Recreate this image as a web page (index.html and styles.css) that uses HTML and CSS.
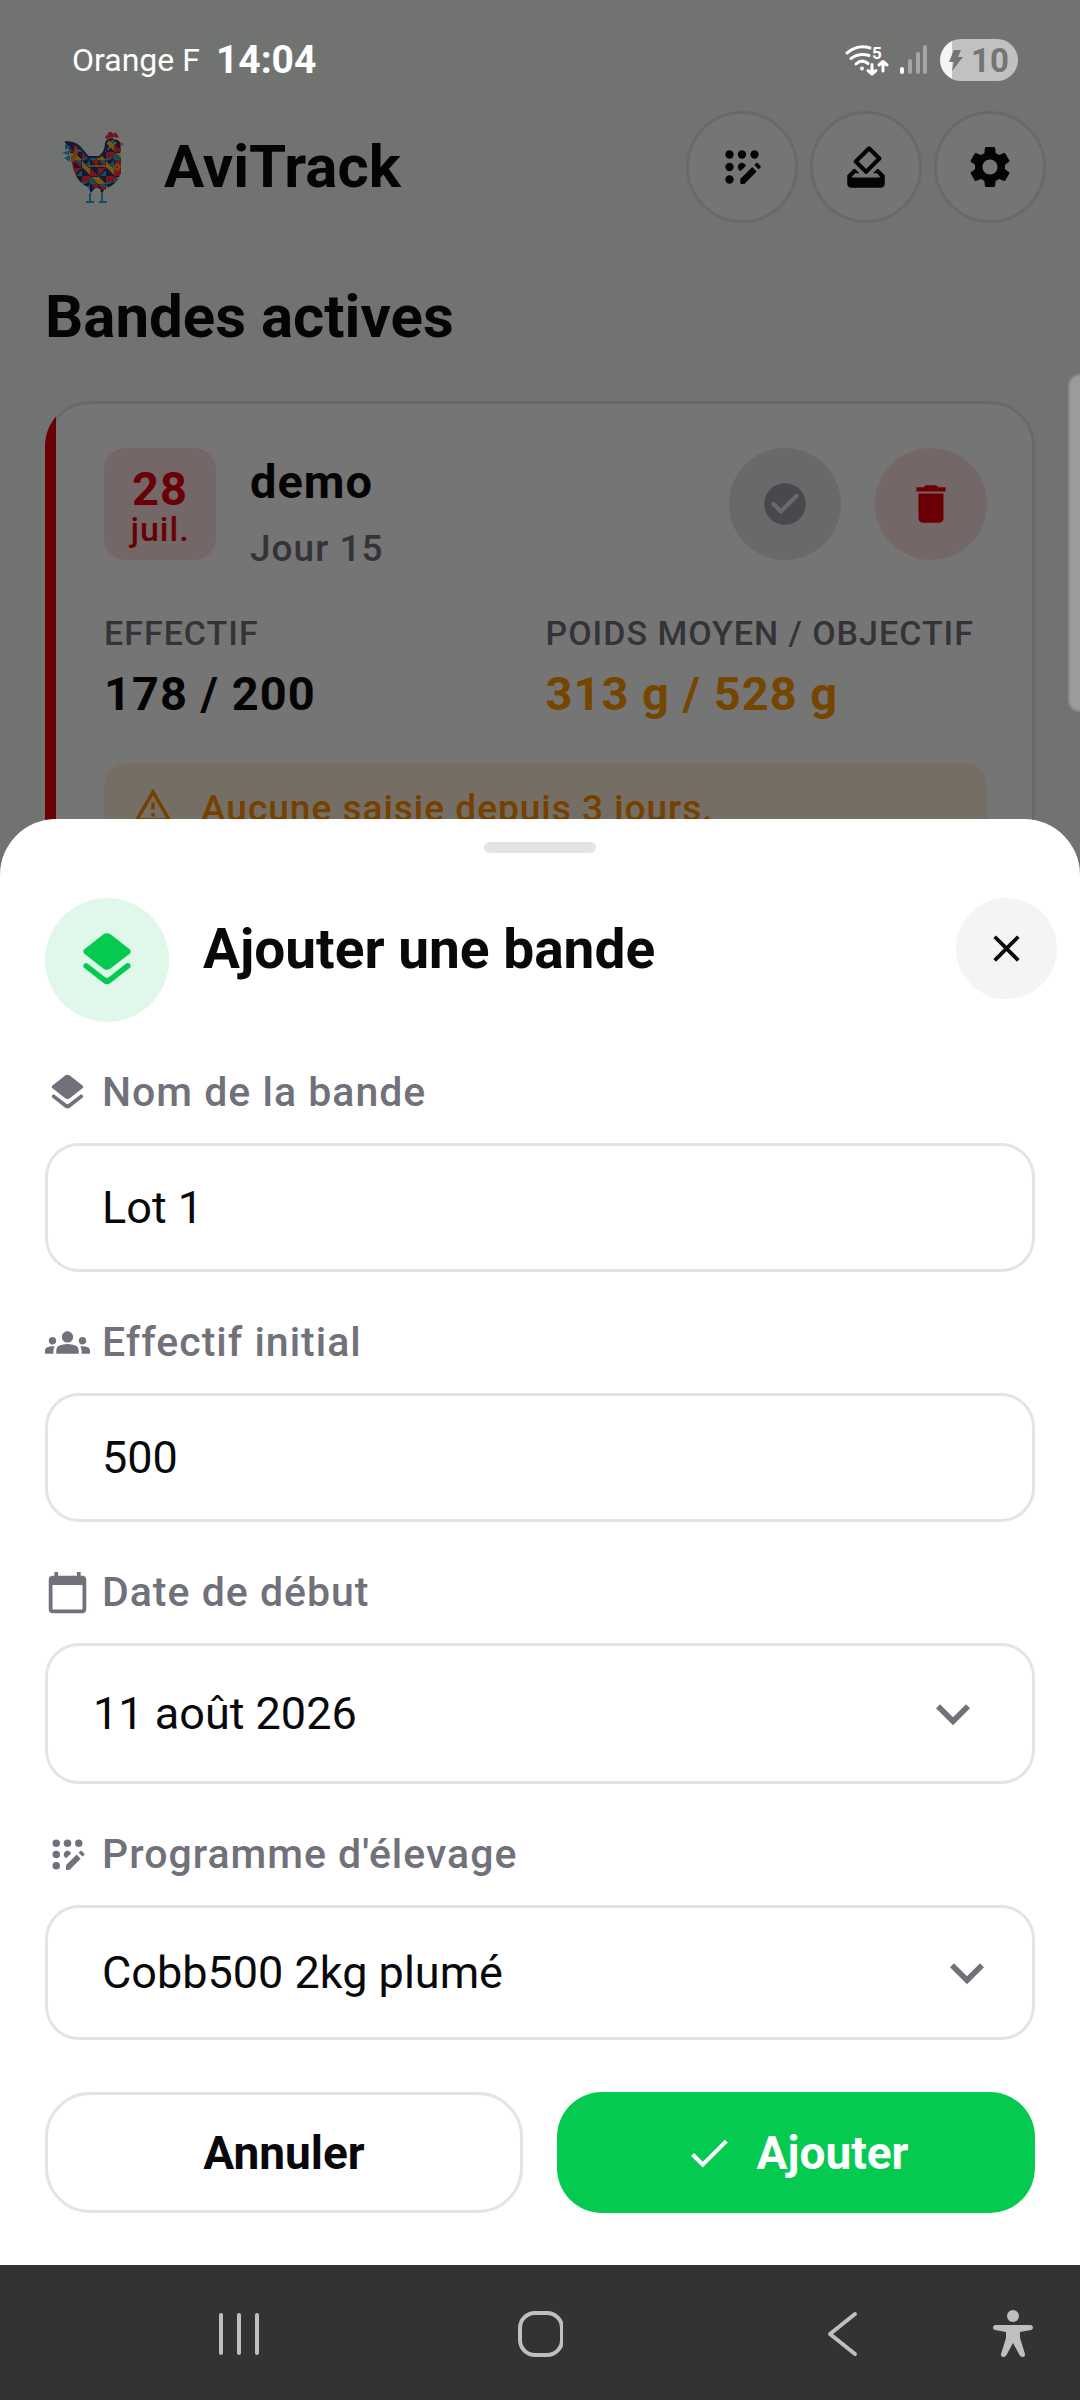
FILE: index.html
```html
<!DOCTYPE html>
<html lang="fr">
<head>
<meta charset="utf-8">
<meta name="viewport" content="width=device-width, initial-scale=1">
<title>AviTrack</title>
<link rel="stylesheet" href="styles.css">
</head>
<body>
<svg class="sprite" aria-hidden="true">
  <symbol id="i-program" viewBox="0 0 24 24">
    <circle cx="6" cy="6" r="2"/><circle cx="12" cy="6" r="2"/><circle cx="18" cy="6" r="2"/>
    <circle cx="6" cy="12" r="2"/><circle cx="6" cy="18" r="2"/>
    <path d="M13.9 11.4A2 2 0 1 0 11.4 13.9z"/>
    <path d="M11.2 18q0-.3.2-.5L16.9 12l2.1 2.2-5.7 5.8q-.2.2-.5.2h-1.2q-.4 0-.4-.4zM17.9 11l.9-.9q.3-.3.7 0l1.4 1.4q.3.3 0 .7l-.9.9z"/>
  </symbol>
  <symbol id="i-layers" viewBox="0 0 24 24">
    <path d="M12.6 18.06c-.36.28-.87.28-1.23 0l-6.15-4.78c-.36-.28-.86-.28-1.22 0-.51.4-.51 1.17 0 1.57l6.76 5.26c.72.56 1.73.56 2.46 0l6.76-5.26c.51-.4.51-1.17 0-1.57l-.01-.01c-.36-.28-.86-.28-1.22 0l-6.15 4.79zm.63-3.02l6.76-5.26c.51-.4.51-1.18 0-1.58l-6.76-5.26c-.72-.56-1.73-.56-2.46 0L4.01 8.21c-.51.4-.51 1.18 0 1.58l6.76 5.26c.72.56 1.74.56 2.46-.01z"/>
  </symbol>
  <symbol id="i-chevron" viewBox="0 0 24 24">
    <path d="M16.59 8.59L12 13.17 7.41 8.59 6 10l6 6 6-6z"/>
  </symbol>
</svg>

<div class="device">
  <div class="status">
    <div class="status-left">
      <span class="carrier">Orange F</span>
      <span class="clock">14:04</span>
    </div>
    <div class="status-right">
      <svg class="wifi" viewBox="0 0 43 30" aria-hidden="true">
        <g fill="none" stroke="#fff" stroke-width="3" stroke-linecap="round" stroke-linejoin="round">
          <path d="M2 8Q13-1 25 3"/><path d="M6 13.500Q14 7.500 24 10.500"/><path d="M11 19Q17 13.500 23 18.500"/>
          <path d="M27 19.500V29M23 25.500L27 29l4-3.500"/><path d="M38 26V17M34 20L38 16.500l4 3.500"/>
        </g>
        <circle cx="17" cy="23.500" r="2" fill="#fff"/>
        <text class="wifi-band" x="27" y="13.500">5</text>
      </svg>
      <svg class="signal" viewBox="0 0 28 30" aria-hidden="true">
        <rect x="0" y="22" width="4" height="7" rx="2" fill="#fff"/>
        <g fill="#a6a7a5"><rect x="8" y="14" width="4" height="15" rx="2"/><rect x="16" y="7" width="4" height="22" rx="2"/><rect x="23" y="0" width="4" height="29" rx="2"/></g>
      </svg>
      <span class="battery">
        <svg class="bolt" viewBox="0 0 14 21" aria-hidden="true"><path d="M5 0h7L9 7h5L3 21l2-9H0z"/></svg>
        <span>10</span>
      </span>
    </div>
  </div>

  <div class="app">
    <header class="topbar">
      <svg class="logo" viewBox="0 2 90 90" role="img" aria-label="Logo AviTrack">
        <defs>
          <pattern id="mosaic" width="24" height="24" patternUnits="userSpaceOnUse">
            <rect width="24" height="24" fill="#2e3478"/>
            <path fill="#ff3040" d="M0 0h8L0 8zM8 8h8v6H8zM17 16h7v8zM16 0l8 8h-8zM0 17h7v7z"/>
            <path fill="#ffc020" d="M9 0h7v7zM0 8l8 8H0zM24 9v7l-7-7zM8 17l7 7H8z"/>
            <path fill="#20b4cc" d="M8 2v6H2zM16 9l7 7h-7zM8 14h8l-8 3zM16 16v8l-4-4zM1 16h6l1 4z"/>
          </pattern>
        </defs>
        <path fill="url(#mosaic)" d="M15 22l9 1q5 2 8 7l6 7h11q7-5 7-14 1-5 7-4 7 0 8 6l-1 6 1 7v10q0 13-10 18l-7 4-2 4-2-5q-3-2-6 0l-3 4-3-6q-10-4-14-16l-3-11-1-8z"/>
        <path fill="none" stroke="#2e3478" stroke-width="2" d="M15 22q12 0 17 8l6 7h11q7-5 7-14 1-4 7-4"/>
        <path fill="#20b4cc" d="M15 24l6 3-6 3zM12 33l8-3-1 5zM14 38l6-3v7z"/>
        <path fill="#f5803c" d="M21 40l4-12 4 2-5 13zM70 22l4 2-4 3z"/>
        <path fill="#ff3040" d="M66 28h5v4l-5-2zM56 19q-2-4 2-4-1-3 2-3 2-1 3 2 2-3 4 0l2 4q-6-2-13 1z"/>
        <path fill="#ff3040" d="M65 42h6v12l-6 2z"/>
        <path fill="none" stroke="#ffc020" stroke-width="1.500" d="M67 44l3 3-3 3-3-3zM39 46h17M62 22l-4 8"/>
        <circle cx="65" cy="23" r="1.500" fill="#ffc020"/>
        <path fill="none" stroke="#20b4cc" stroke-width="2" d="M40 73v9M36 82h8M52 73v9M49 82h8"/>
      </svg>
      <h1 class="brand">AviTrack</h1>
      <div class="actions">
        <button class="round outlined" aria-label="Programmes"><svg class="icon"><use href="#i-program"/></svg></button>
        <button class="round outlined" aria-label="Votes"><svg class="icon" viewBox="0 0 24 24"><path d="M18 13h-.68l-2 2h1.91L19 17H5l1.78-2h2.05l-2-2H6l-3 3v4c0 1.100.890 2 1.990 2H19c1.100 0 2-.890 2-2v-4l-3-3zm-1-5.050l-4.950 4.950-3.540-3.540 4.950-4.950L17 7.950zm-4.240-5.660L6.390 8.660c-.390.390-.390 1.020 0 1.410l4.950 4.950c.390.390 1.020.390 1.410 0l6.360-6.360c.390-.390.390-1.020 0-1.410L14.160 2.300c-.380-.400-1.010-.400-1.400-.010z"/></svg></button>
        <button class="round outlined" aria-label="Paramètres"><svg class="icon" viewBox="0 0 24 24"><path d="M19.14,12.94c0.04-0.3,0.06-0.61,0.06-0.94c0-0.32-0.02-0.64-0.07-0.94l2.03-1.58c0.18-0.14,0.23-0.41,0.12-0.61l-1.92-3.32c-0.12-0.22-0.37-0.29-0.59-0.22l-2.39,0.96c-0.5-0.38-1.03-0.7-1.62-0.94L14.4,2.81c-0.04-0.24-0.24-0.41-0.48-0.41h-3.84c-0.24,0-0.43,0.17-0.47,0.41L9.25,5.35C8.66,5.59,8.12,5.92,7.63,6.29L5.24,5.33c-0.22-0.08-0.47,0-0.59,0.22L2.74,8.87C2.62,9.08,2.66,9.34,2.86,9.48l2.03,1.58C4.84,11.36,4.8,11.69,4.8,12s0.02,0.64,0.07,0.94l-2.03,1.58c-0.18,0.14-0.23,0.41-0.12,0.61l1.92,3.32c0.12,0.22,0.37,0.29,0.59,0.22l2.39-0.96c0.5,0.38,1.03,0.7,1.62,0.94l0.36,2.54c0.05,0.24,0.24,0.41,0.48,0.41h3.84c0.24,0,0.44-0.17,0.47-0.41l0.36-2.54c0.59-0.24,1.13-0.56,1.62-0.94l2.39,0.96c0.22,0.08,0.47,0,0.59-0.22l1.92-3.32c0.12-0.22,0.07-0.47-0.12-0.61L19.14,12.94zM12,15.6c-1.98,0-3.6-1.62-3.6-3.6s1.62-3.6,3.6-3.6s3.6,1.62,3.6,3.6S13.98,15.6,12,15.6z"/></svg></button>
      </div>
    </header>

    <main class="content">
      <h2 class="section-title">Bandes actives</h2>
      <article class="flock">
        <div class="flock-head">
          <div class="date-badge"><span class="day">28</span><span class="month">juil.</span></div>
          <div class="flock-name">
            <h3>demo</h3>
            <p>Jour 15</p>
          </div>
          <div class="flock-actions">
            <button class="round done" aria-label="Terminer"><svg class="icon" viewBox="0 0 24 24"><path d="M12 2C6.480 2 2 6.480 2 12s4.480 10 10 10 10-4.480 10-10S17.520 2 12 2zM9.290 16.290L5.700 12.700c-.390-.390-.390-1.020 0-1.410.390-.390 1.020-.390 1.410 0L10 14.170l6.880-6.880c.390-.390 1.020-.390 1.410 0 .390.390.390 1.020 0 1.410l-7.590 7.590c-.380.390-1.020.390-1.410 0z"/></svg></button>
            <button class="round delete" aria-label="Supprimer"><svg class="icon" viewBox="0 0 24 24"><path d="M6 19c0 1.100.900 2 2 2h8c1.100 0 2-.900 2-2V7H6v12zM19 4h-3.500l-1-1h-5l-1 1H5v2h14V4z"/></svg></button>
          </div>
        </div>
        <dl class="stats">
          <div><dt>EFFECTIF</dt><dd>178 / 200</dd></div>
          <div><dt>POIDS MOYEN / OBJECTIF</dt><dd class="low">313 g / 528 g</dd></div>
        </dl>
        <div class="warning">
          <svg class="warning-icon" viewBox="0 0 24 24" aria-hidden="true"><path d="M12 5.990L19.530 19H4.470L12 5.990M12 2L1 21h22L12 2zm1 14h-2v2h2v-2zm0-6h-2v4h2v-4z"/></svg>
          <p>Aucune saisie depuis 3 jours.</p>
        </div>
      </article>
    </main>
  </div>

  <div class="overlay">
    <span class="edge-handle"></span>
    <form class="sheet" role="dialog" aria-labelledby="sheet-title">
      <span class="grip"></span>
      <div class="sheet-head">
        <span class="sheet-badge"><svg viewBox="0 0 24 24" aria-hidden="true"><use href="#i-layers"/></svg></span>
        <h2 id="sheet-title">Ajouter une bande</h2>
        <button type="button" class="close" aria-label="Fermer"><svg viewBox="0 0 24 24"><path d="M19 6.410L17.590 5 12 10.590 6.410 5 5 6.410 10.590 12 5 17.590 6.410 19 12 13.410 17.590 19 19 17.590 13.410 12z"/></svg></button>
      </div>

      <div class="fields">
        <div class="field">
          <label for="name"><svg class="label-icon"><use href="#i-layers"/></svg>Nom de la bande</label>
          <input class="control" id="name" type="text" value="Lot 1">
        </div>
        <div class="field">
          <label for="count"><svg class="label-icon" viewBox="0 0 24 24"><path d="M12 12.750c1.630 0 3.070.390 4.240.900 1.080.480 1.760 1.560 1.760 2.730V18H6v-1.610c0-1.180.680-2.260 1.760-2.730 1.170-.520 2.610-.910 4.240-.910zM4 13c1.100 0 2-.900 2-2s-.900-2-2-2-2 .900-2 2 .900 2 2 2zm1.130 1.100c-.370-.060-.740-.100-1.130-.100-.990 0-1.930.210-2.780.580C.480 14.900 0 15.620 0 16.430V18h4.500v-1.610c0-.830.230-1.610.630-2.290zM20 13c1.100 0 2-.900 2-2s-.900-2-2-2-2 .900-2 2 .900 2 2 2zm4 3.430c0-.810-.480-1.530-1.220-1.850-.850-.370-1.790-.580-2.780-.580-.390 0-.760.040-1.130.100.400.680.630 1.460.630 2.290V18H24v-1.570zM12 6c1.660 0 3 1.340 3 3s-1.340 3-3 3-3-1.340-3-3 1.340-3 3-3z"/></svg>Effectif initial</label>
          <input class="control" id="count" type="text" inputmode="numeric" value="500">
        </div>
        <div class="field">
          <label for="start"><svg class="label-icon" viewBox="0 0 24 24"><path d="M20 3h-1V1h-2v2H7V1H5v2H4c-1.100 0-2 .900-2 2v16c0 1.100.900 2 2 2h16c1.100 0 2-.900 2-2V5c0-1.100-.900-2-2-2zm0 18H4V8h16v13z"/></svg>Date de début</label>
          <button class="control date" id="start" type="button"><span>11 août 2026</span><svg class="chevron"><use href="#i-chevron"/></svg></button>
        </div>
        <div class="field">
          <label for="program"><svg class="label-icon"><use href="#i-program"/></svg>Programme d'élevage</label>
          <div class="select-wrap">
            <select class="control" id="program"><option>Cobb500 2kg plumé</option></select>
            <svg class="chevron"><use href="#i-chevron"/></svg>
          </div>
        </div>
      </div>

      <div class="sheet-actions">
        <button type="button" class="btn cancel">Annuler</button>
        <button type="submit" class="btn submit"><svg class="icon" viewBox="0 0 24 24" aria-hidden="true"><path d="M9 16.170L4.830 12l-1.420 1.410L9 19 21 7l-1.410-1.410z"/></svg>Ajouter</button>
      </div>
    </form>

    <nav class="system-nav">
      <button aria-label="Applications récentes"><svg width="46" height="48" viewBox="0 0 46 48"><path d="M5 6v38M23 6v38M41 6v38"/></svg></button>
      <button aria-label="Accueil"><svg width="46" height="48" viewBox="0 0 46 48"><rect x="3" y="4" width="42" height="42" rx="15"/></svg></button>
      <button aria-label="Retour"><svg width="46" height="48" viewBox="0 0 46 48"><path d="M37 5L12 25l25 20"/></svg></button>
      <button aria-label="Accessibilité"><svg class="solid" width="40" height="48" viewBox="0 0 40 48"><circle cx="20" cy="7" r="6"/><path d="M2 16h36q2 .500 2 2.500T38 21l-11 2v6l5 16q.500 3-2.500 3-2 0-3-2L20 34l-6.500 12q-1 2-3 2-3 0-2.500-3l5-16v-6L2 21q-2-.500-2-2.500T2 16z"/></svg></button>
    </nav>
  </div>
</div>
</body>
</html>
```
FILE: styles.css
```css
:root {
  --text: #09090b;
  --muted: #71717b;
  --line: #e4e4e7;
  --green: #04cb50;
  --red: #e7000b;
  --orange: #fe9a00;
  --gutter: 45px;
}

* { box-sizing: border-box; }

body {
  margin: 0;
  font-family: Roboto, "Liberation Sans", sans-serif;
  color: var(--text);
}

h1, h2, h3, p, dl, dd { margin: 0; }

button {
  padding: 0;
  border: 0;
  font: inherit;
  color: inherit;
  background: none;
}

svg { flex: none; fill: currentColor; }

.sprite { position: absolute; width: 0; height: 0; }

.icon { width: 50px; height: 50px; }

.device {
  position: relative;
  min-height: 100vh;
  background: #f6faf3;
}

/* Status bar */
.status {
  position: absolute;
  inset: 0 0 auto;
  z-index: 2;
  display: flex;
  justify-content: space-between;
  align-items: center;
  height: 120px;
  padding: 0 62px 0 72px;
  color: #fff;
}

.status-left, .status-right { display: flex; align-items: center; }
.status-left { gap: 16px; }
.status-right { gap: 12px; }
.carrier { font-size: 32px; }
.clock { font-size: 39px; font-weight: 700; }
.wifi { width: 43px; height: 30px; overflow: visible; }
.wifi-band { font-size: 17px; font-weight: 700; fill: #fff; }
.signal { width: 28px; height: 30px; }

.battery {
  display: flex;
  align-items: center;
  justify-content: center;
  gap: 8px;
  width: 78px;
  height: 42px;
  border-radius: 21px;
  font-size: 33px;
  font-weight: 700;
  color: #747573;
  background: linear-gradient(to right, #f4f4f4 12px, #c1c1c1 12px);
}

.bolt { width: 14px; height: 21px; }

/* Flock list */
.app { padding-top: 111px; }

.topbar {
  display: flex;
  align-items: center;
  padding: 0 34px 0 50px;
}

.logo { width: 90px; height: 90px; margin-right: 24px; }
.brand { flex: 1; font-size: 60px; font-weight: 700; line-height: 76px; }
.actions { display: flex; gap: 12px; }

.round {
  display: grid;
  place-items: center;
  width: 112px;
  height: 112px;
  border-radius: 50%;
}

.outlined { border: 3px solid var(--line); background: #fff; }

.content { padding: 56px var(--gutter); }

.section-title {
  margin-bottom: 46px;
  font-size: 60px;
  font-weight: 700;
  line-height: 76px;
}

.flock {
  position: relative;
  overflow: hidden;
  padding: 47px 48px 48px 59px;
  border-radius: 45px;
  background: #fff;
}

/* Outline first, then the status stripe over its left edge */
.flock::before {
  content: "";
  position: absolute;
  inset: 0;
  border: 3px solid var(--line);
  border-radius: inherit;
  pointer-events: none;
}

.flock::after {
  content: "";
  position: absolute;
  inset: 0 auto 0 0;
  width: 11px;
  background: var(--red);
}

.flock-head {
  display: flex;
  align-items: flex-start;
  gap: 34px;
  margin-bottom: 37px;
}

.date-badge {
  display: flex;
  flex-direction: column;
  align-items: center;
  justify-content: center;
  width: 112px;
  height: 112px;
  border-radius: 22px;
  color: var(--red);
  background: #fce0e1;
}

.day { font-size: 47px; font-weight: 700; line-height: 50px; letter-spacing: 1px; }
.month { font-size: 34px; font-weight: 500; line-height: 30px; letter-spacing: 1px; }

.flock-name { flex: 1; }
.flock-name h3 { margin-bottom: 8px; font-size: 47px; font-weight: 700; line-height: 68px; letter-spacing: 1px; }
.flock-name p { font-size: 37px; font-weight: 500; line-height: 50px; letter-spacing: 1px; color: var(--muted); }

.flock-actions { display: flex; gap: 34px; }
.done { color: #9f9fa9; background: var(--line); }
.delete { color: var(--red); background: #fce0e1; }

.stats {
  display: grid;
  grid-template-columns: 1fr 1fr;
  margin-bottom: 35px;
}

.stats dt { margin-bottom: 4px; font-size: 34px; font-weight: 500; line-height: 45px; letter-spacing: 1px; color: var(--muted); }
.stats dd { font-size: 47px; font-weight: 700; line-height: 68px; letter-spacing: 1px; }
.stats .low { color: var(--orange); }

.warning {
  display: flex;
  align-items: flex-start;
  gap: 27px;
  padding: 22px 28px;
  border-radius: 22px;
  color: #fe8d00;
  background: #ffefd9;
}

.warning-icon { width: 42px; height: 42px; }
.warning p { font-size: 37px; font-weight: 500; line-height: 48px; letter-spacing: 1px; }

/* Modal layer */
.overlay {
  position: absolute;
  inset: 0;
  z-index: 1;
  display: flex;
  flex-direction: column;
  justify-content: flex-end;
  background: rgba(0, 0, 0, .54);
}

.edge-handle {
  position: absolute;
  top: 374px;
  right: 0;
  width: 12px;
  height: 338px;
  border: 2px solid #8b8c8a;
  border-right: 0;
  border-radius: 12px 0 0 12px;
  background: #9b9c9a;
}

.sheet {
  position: relative;
  display: flex;
  flex-direction: column;
  padding-top: 23px;
  border-radius: 56px 56px 0 0;
  background: #fff;
}

.grip {
  align-self: center;
  width: 112px;
  height: 11px;
  margin-bottom: 45px;
  border-radius: 6px;
  background: var(--line);
}

.sheet-head {
  display: flex;
  align-items: flex-start;
  gap: 34px;
  padding: 0 23px 0 var(--gutter);
}

.sheet-badge {
  display: grid;
  place-items: center;
  width: 124px;
  height: 124px;
  border-radius: 50%;
  color: var(--green);
  background: #e0f8e9;
}

.sheet-badge svg { width: 68px; height: 68px; }
.sheet-head h2 { flex: 1; font-size: 55px; font-weight: 700; line-height: 102px; }

.close {
  display: grid;
  place-items: center;
  width: 101px;
  height: 101px;
  border-radius: 50%;
  background: #f4f4f5;
}

.close svg { width: 45px; height: 45px; }

.fields {
  display: flex;
  flex-direction: column;
  gap: 42px;
  padding: 42px var(--gutter) 52px;
}

.field { display: flex; flex-direction: column; gap: 23px; }

.field label {
  display: flex;
  align-items: center;
  gap: 12px;
  font-size: 41px;
  font-weight: 500;
  line-height: 56px;
  letter-spacing: 1px;
  color: var(--muted);
}

.label-icon { width: 45px; height: 45px; }

.control {
  width: 100%;
  height: 129px;
  padding: 0 54px;
  border: 3px solid var(--line);
  border-radius: 34px;
  font-family: inherit;
  font-size: 45px;
  color: var(--text);
  background: #fff;
  appearance: none;
}

.date {
  display: flex;
  align-items: center;
  justify-content: space-between;
  height: 141px;
  padding: 0 45px;
}

.chevron { width: 68px; height: 68px; color: var(--muted); }

.select-wrap { display: grid; align-items: center; }
.select-wrap > * { grid-area: 1 / 1; }
.select-wrap .control { height: 135px; }
.select-wrap .chevron { justify-self: end; margin-right: 34px; pointer-events: none; }

.sheet-actions {
  display: grid;
  grid-template-columns: 1fr 1fr;
  gap: 34px;
  padding: 0 var(--gutter) 52px;
}

.btn {
  display: flex;
  align-items: center;
  justify-content: center;
  gap: 23px;
  height: 121px;
  border-radius: 45px;
  font-size: 46px;
  font-weight: 700;
}

.cancel { border: 3px solid var(--line); }
.submit { color: #fff; background: var(--green); }

/* System navigation */
.system-nav {
  display: grid;
  grid-template-columns: 1fr 1fr 1fr 42px;
  place-items: center;
  height: 135px;
  padding: 0 46px 0 88px;
  background: #333;
}

.system-nav button { display: grid; }
.system-nav svg { fill: none; stroke: #bfbfbf; stroke-width: 4px; stroke-linecap: round; stroke-linejoin: round; }
.system-nav .solid { fill: #bfbfbf; stroke: none; }
```
